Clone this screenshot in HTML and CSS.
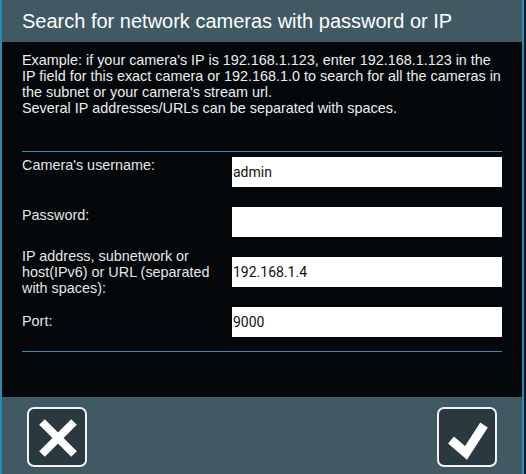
FILE: index.html
```html
<!DOCTYPE html>
<html lang="en">
<head>
  <meta charset="UTF-8" />
  <title>Search for network cameras</title>
  <link rel="stylesheet" href="styles.css">
</head>
<body>

<div class="dialog">
  <div class="title">Search for network cameras with password or IP</div>

  <div class="content">
    <p class="hint">Example: if your camera's IP is 192.168.1.123, enter 192.168.1.123 in the IP field for this exact camera or 192.168.1.0 to search for all the cameras in the subnet or your camera's stream url.<br>Several IP addresses/URLs can be separated with spaces.</p>

    <div class="sep"></div>

    <div class="form">
      <label class="lbl" for="user">Camera's username:</label>
      <input class="field" type="text" id="user" value="admin" />

      <label class="lbl" for="pass">Password:</label>
      <input class="field" type="password" id="pass" />

      <label class="lbl lbl-mid" for="ip">IP address, subnetwork or host(IPv6) or URL (separated with spaces):</label>
      <input class="field" type="text" id="ip" value="192.168.1.4" />

      <label class="lbl lbl-low" for="port">Port:</label>
      <input class="field" type="text" id="port" value="9000" />
    </div>

    <div class="sep sep-bottom"></div>
  </div>

  <div class="footer">
    <button class="btn" title="Cancel">
      <svg width="56" height="56" viewBox="0 0 56 56">
        <path d="M13 13 L45 45 M45 13 L13 45" stroke="#fff" stroke-width="8" fill="none" />
      </svg>
    </button>
    <button class="btn" title="OK">
      <svg width="56" height="56" viewBox="0 0 56 56">
        <polyline points="12,31 27,44 45,16" stroke="#fff" stroke-width="9" fill="none" stroke-linejoin="miter" />
      </svg>
    </button>
  </div>
</div>

</body>
</html>
```

FILE: styles.css
```css
* {
  box-sizing: border-box;
}
body {
  margin: 0;
  background: #0a1a22;
  font-family: "Liberation Sans", Arial, sans-serif;
  color: #eeeeee;
}

.dialog {
  width: 524px;
  height: 474px;
  border-left: 2px solid #2b8bb0;
  border-right: 2px solid #2b8bb0;
  display: flex;
  flex-direction: column;
}

.title {
  height: 42px;
  background: #405963;
  color: #fff;
  font-size: 20px;
  padding: 10px 0 0 20px;
}

.content {
  height: 355px;
  background: #03070a;
  padding: 10px 20px 0 20px;
}

.hint {
  margin: 0;
  font-size: 14.4px;
  line-height: 16px;
}

.sep {
  height: 1px;
  background: #3a8db2;
  margin-top: 35px;
}
.sep-bottom {
  margin-top: 14px;
}

.form {
  margin-top: 5px;
  display: grid;
  grid-template-columns: 210px 270px;
  grid-auto-rows: 30px;
  row-gap: 20px;
}

.lbl {
  font-size: 14.4px;
  line-height: 16px;
  color: #e6e6e6;
  align-self: start;
}
.lbl-mid {
  align-self: center;
}
.lbl-low {
  padding-top: 6px;
}

.field {
  width: 270px;
  height: 30px;
  border: none;
  border-radius: 0;
  background: #fff;
  padding: 0 1px;
  font-family: Roboto, "Liberation Sans", sans-serif;
  font-size: 14px;
  color: #111;
}

.footer {
  flex: 1;
  background: #405963;
  display: flex;
  justify-content: space-between;
  align-items: flex-start;
  padding: 10px 25px 0 25px;
}

.btn {
  width: 60px;
  height: 60px;
  padding: 0;
  border: 2px solid #f2f2f2;
  border-radius: 7px;
  background: #29393f;
  cursor: pointer;
}
.btn svg {
  display: block;
}
```
